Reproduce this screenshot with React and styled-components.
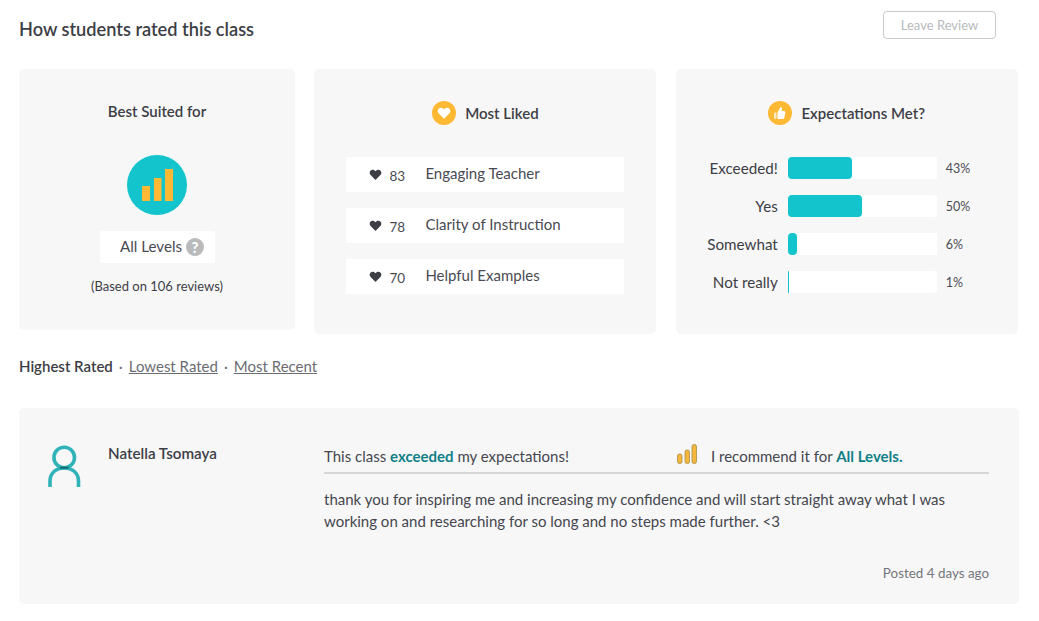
import React from "react";
import styled, { createGlobalStyle } from "styled-components";

const Global = createGlobalStyle`
  html, body { margin: 0; padding: 0; background: #fff; }
  body { font-family: Lato, "Open Sans", sans-serif; color: #3d3e45; }
`;
const Page = styled.div`
  width: 1039px; height: 621px; box-sizing: border-box; padding: 11px 20px 0 19px; overflow: hidden;
`;
const TopBar = styled.div`
  display: flex; justify-content: space-between; align-items: center; height: 28px; padding-right: 23px; margin-bottom: 30px;
`;
const Title = styled.h2`
  margin: 7px 0 0; font-size: 18.2px; font-weight: 600; color: #3d3e45; line-height: 24px;
`;
const LeaveButton = styled.button`
  width: 113px; height: 28px; box-sizing: border-box; border: 1.5px solid #c9cacc; border-radius: 4px; background: #fff;
  color: #b9babd; font: 400 13px Lato, sans-serif; padding: 0;
`;
const Cards = styled.div`
  display: flex; align-items: flex-start; gap: 19.4px;
`;
const Card = styled.section`
  box-sizing: border-box; width: ${p => p.$w}px; height: ${p => p.$h}px; background: #f7f7f8; border-radius: 5px; padding-top: ${p => p.$pt}px;
  display: flex; flex-direction: column; align-items: center;
`;
const CardTitle = styled.h3`
  margin: 0; font-size: 15px; font-weight: 600; line-height: 24px; color: #3d3e45;
`;
const Big = styled.div`
  width: 60px; height: 60px; border-radius: 50%; background: #14c4cc; margin-top: 32px;
  display: flex; align-items: center; justify-content: center;
`;
const LevelPill = styled.div`
  width: 115px; height: 32px; margin-top: 16px; background: #fff; border-radius: 2px; display: flex; align-items: center; justify-content: center; gap: 4px;
  font-size: 15.2px; padding-left: 10px; box-sizing: border-box; color: #4a4b52;
`;
const LevelText = styled.span`
  padding-bottom: 2px;
`;
const Help = styled.span`
  width: 18px; height: 18px; border-radius: 50%; background: #b9babb; color: #fff; font-size: 15px; font-weight: 900; display: flex; align-items: center; justify-content: center;
`;
const Based = styled.p`
  margin: 15px 0 0; font-size: 13px; line-height: 16px; color: #3d3e45;
`;
const Header = styled.div`
  display: flex; align-items: center; gap: 9px; height: 24px;
`;
const Badge = styled.span`
  width: 24px; height: 24px; border-radius: 50%; background: #fdb933; display: flex; align-items: center; justify-content: center;
`;
const LikedList = styled.ul`
  list-style: none; margin: 32px 0 0; padding: 0; width: 278px; display: flex; flex-direction: column; gap: 16px;
`;
const LikedRow = styled.li`
  height: 35px; background: #fff; display: flex; align-items: center; padding-left: 23px; box-sizing: border-box; color: #4a4b52;
`;
const Count = styled.span`
  width: 36px; margin-left: 7px; font-size: 13.5px; padding-top: 2px;
`;
const LikedLabel = styled.span`
  font-size: 15px; padding-bottom: 3px;
`;
const Bars = styled.div`
  margin-top: 32px; width: 342px; display: flex; flex-direction: column; gap: 16px;
`;
const BarRow = styled.div`
  display: flex; align-items: center; height: 22px;
`;
const BarLabel = styled.span`
  width: 102px; text-align: right; font-size: 15.2px; color: #3d3e45; padding-bottom: 1px;
`;
const Track = styled.div`
  width: 149px; height: 22px; margin-left: 10px; background: #fff; border-radius: 2px;
`;
const Fill = styled.div`
  height: 100%; background: #14c4cc; border-radius: 4px;
`;
const Pct = styled.span`
  margin-left: 9px; font-size: 12.5px; color: #4a4b52;
`;
const Sort = styled.nav`
  margin-top: 22px; height: 20px; display: flex; align-items: center; gap: 6px; font-size: 15px; line-height: 20px; color: #6b6c72;
`;
const Active = styled.span`
  font-weight: 600; color: #3d3e45;
`;
const SortLink = styled.a`
  text-decoration: underline; color: #6b6c72;
`;
const Review = styled.article`
  margin-top: 32px; width: 1000px; height: 196px; box-sizing: border-box; background: #f7f7f8; border-radius: 5px; display: flex; padding: 34px 30px 0 28px;
`;
const Avatar = styled.div`
  width: 61px; flex: none; padding-top: 3px;
`;
const Name = styled.div`
  width: 216px; flex: none; font-size: 15.2px; font-weight: 600; line-height: 22px; color: #3d3e45;
`;
const Main = styled.div`
  flex: 1; min-width: 0; display: flex; flex-direction: column;
`;
const Verdict = styled.div`
  display: flex; align-items: flex-end; height: 24px; padding-bottom: 6px; border-bottom: 2px solid #d5d6d7; font-size: 15px; color: #45464d; box-sizing: content-box;
`;
const VerdictText = styled.span`
  width: 353px; line-height: 20px;
`;
const Recommend = styled.span`
  margin-left: 14px; line-height: 20px;
`;
const Teal = styled.b`
  color: #0f7f86; font-weight: 700;
`;
const Body = styled.p`
  margin: 14px 0 0; font-size: 15px; line-height: 22px; color: #45464d;
`;
const Posted = styled.div`
  margin-top: 32px; text-align: right; font-size: 13.4px; line-height: 18px; color: #75767b;
`;

const Heart = ({ size = 13, color = "#3d3e45" }) => (
  <svg width={size} height={size} viewBox="0 0 24 24" fill={color}><path d="M12 22 2.600 12.400C-.4 9 1.600 3 6.800 3c2.300 0 4 1.200 5.200 3.200C13.200 4.200 14.900 3 17.200 3c5.200 0 7.200 6 4.200 9.400L12 22Z" /></svg>
);
const Thumb = () => (
  <svg width="16" height="16" viewBox="0 0 16 16" fill="#fff"><rect x="2" y="7.500" width="2.500" height="6.500" rx="1" opacity=".7" /><path d="M5.500 7.500 8.500 2c1.200 0 1.800 1 1.500 2.200L9.500 6H12c1 0 1.500.8 1.300 1.700l-1 5c-.2.800-.8 1.300-1.600 1.300H5.500V7.500Z" /></svg>
);
const LevelBars = () => (
  <svg width="31" height="32" viewBox="0 0 31 32" fill="#fdb933"><rect x="0" y="17" width="8" height="15" /><rect x="12" y="9" width="7.500" height="23" /><rect x="23" y="0" width="8" height="32" /></svg>
);
const OutlineBars = () => (
  <svg width="20" height="20" viewBox="0 0 20 20" fill="#f3b73b" stroke="#a98a4a" strokeWidth=".8" style={{ flex: "none", marginBottom: "2px" }}>
    <rect x=".5" y="10" width="4.500" height="9.500" rx="2" /><rect x="8" y="6" width="4.500" height="13.500" rx="2" /><rect x="15" y=".5" width="4.500" height="19" rx="2" />
  </svg>
);
const Person = () => (
  <svg width="36" height="46" viewBox="0 0 36 46" fill="none" stroke="#2fb3b8" strokeWidth="3.600">
    <circle cx="17.200" cy="12.500" r="10.300" />
    <path d="M3 42V36C3 28 9 23 17.200 23S31.500 28 31.500 36V42" />
    <path d="M13 22.700H21.500" stroke="#14686c" strokeWidth="2" />
  </svg>
);

const liked = [[83, "Engaging Teacher"], [78, "Clarity of Instruction"], [70, "Helpful Examples"]];
const bars = [["Exceeded!", 43], ["Yes", 50], ["Somewhat", 6], ["Not really", 1]];

export default function App() {
  return (
    <Page>
      <Global />
      <TopBar>
        <Title>How students rated this class</Title>
        <LeaveButton>Leave Review</LeaveButton>
      </TopBar>
      <Cards>
        <Card $w={276} $h={261} $pt={30}>
          <CardTitle>Best Suited for</CardTitle>
          <Big><LevelBars /></Big>
          <LevelPill><LevelText>All Levels</LevelText> <Help>?</Help></LevelPill>
          <Based>(Based on 106 reviews)</Based>
        </Card>
        <Card $w={342} $h={265} $pt={32}>
          <Header><Badge><Heart size={14} color="#fff" /></Badge><CardTitle>Most Liked</CardTitle></Header>
          <LikedList>
            {liked.map(([n, label]) => (
              <LikedRow key={label}><Heart /><Count>{n}</Count><LikedLabel>{label}</LikedLabel></LikedRow>
            ))}
          </LikedList>
        </Card>
        <Card $w={342} $h={265} $pt={32}>
          <Header><Badge><Thumb /></Badge><CardTitle>Expectations Met?</CardTitle></Header>
          <Bars>
            {bars.map(([label, v]) => (
              <BarRow key={label}>
                <BarLabel>{label}</BarLabel>
                <Track><Fill style={{ width: `${v}%` }} /></Track>
                <Pct>{v}%</Pct>
              </BarRow>
            ))}
          </Bars>
        </Card>
      </Cards>
      <Sort>
        <Active>Highest Rated</Active><span>·</span><SortLink>Lowest Rated</SortLink><span>·</span><SortLink>Most Recent</SortLink>
      </Sort>
      <Review>
        <Avatar><Person /></Avatar>
        <Name>Natella Tsomaya</Name>
        <Main>
          <Verdict>
            <VerdictText>This class <Teal>exceeded</Teal> my expectations!</VerdictText>
            <OutlineBars />
            <Recommend>I recommend it for <Teal>All Levels.</Teal></Recommend>
          </Verdict>
          <Body>thank you for inspiring me and increasing my confidence and will start straight away what I was working on and researching for so long and no steps made further. &lt;3</Body>
          <Posted>Posted 4 days ago</Posted>
        </Main>
      </Review>
    </Page>
  );
}
